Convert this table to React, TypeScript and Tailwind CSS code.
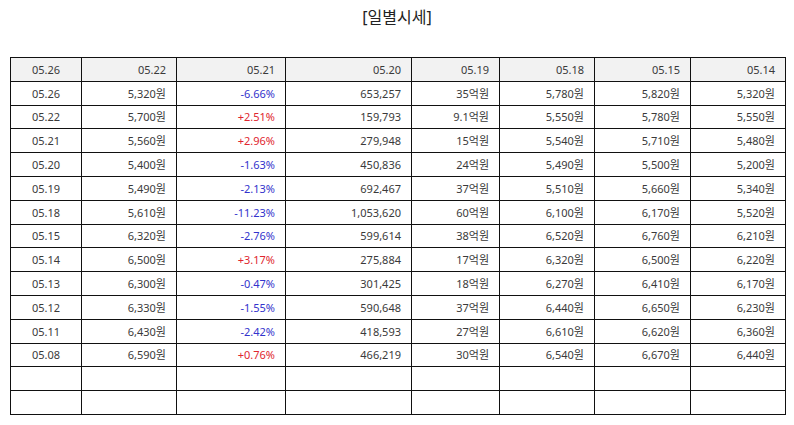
const header = ["05.26", "05.22", "05.21", "05.20", "05.19", "05.18", "05.15", "05.14"];

type Row = [string, string, string, string, string, string, string, string];

const rows: Row[] = [
  ["05.26", "5,320원", "-6.66%", "653,257", "35억원", "5,780원", "5,820원", "5,320원"],
  ["05.22", "5,700원", "+2.51%", "159,793", "9.1억원", "5,550원", "5,780원", "5,550원"],
  ["05.21", "5,560원", "+2.96%", "279,948", "15억원", "5,540원", "5,710원", "5,480원"],
  ["05.20", "5,400원", "-1.63%", "450,836", "24억원", "5,490원", "5,500원", "5,200원"],
  ["05.19", "5,490원", "-2.13%", "692,467", "37억원", "5,510원", "5,660원", "5,340원"],
  ["05.18", "5,610원", "-11.23%", "1,053,620", "60억원", "6,100원", "6,170원", "5,520원"],
  ["05.15", "6,320원", "-2.76%", "599,614", "38억원", "6,520원", "6,760원", "6,210원"],
  ["05.14", "6,500원", "+3.17%", "275,884", "17억원", "6,320원", "6,500원", "6,220원"],
  ["05.13", "6,300원", "-0.47%", "301,425", "18억원", "6,270원", "6,410원", "6,170원"],
  ["05.12", "6,330원", "-1.55%", "590,648", "37억원", "6,440원", "6,650원", "6,230원"],
  ["05.11", "6,430원", "-2.42%", "418,593", "27억원", "6,610원", "6,620원", "6,360원"],
  ["05.08", "6,590원", "+0.76%", "466,219", "30억원", "6,540원", "6,670원", "6,440원"],
];

const cell = "border border-[#111] h-[23.8px] px-[10px] py-0 text-right";
const first = "border border-[#111] h-[23.8px] px-[10px] py-0 text-center";

export default function App() {
  return (
    <div
      className="w-[794px] h-[425px] bg-white text-[#3a3a3a] overflow-hidden"
      style={{ fontFamily: '"Noto Sans", "Noto Sans CJK KR", sans-serif' }}
    >
      <h1 className="text-center text-[16px] text-[#222] pt-[5px] h-[57px]">[일별시세]</h1>
      <table className="ml-[10px] border-collapse table-fixed w-[775px] text-[11px] leading-none">
        <colgroup>
          <col className="w-[71px]" />
          <col className="w-[95px]" />
          <col className="w-[109px]" />
          <col className="w-[126px]" />
          <col className="w-[88px]" />
          <col className="w-[95px]" />
          <col className="w-[96px]" />
          <col className="w-[95px]" />
        </colgroup>
        <thead>
          <tr className="bg-[#f2f2f2]">
            {header.map((h, i) => (
              <th key={i} className={(i === 0 ? first : cell) + " font-normal"}>
                {h}
              </th>
            ))}
          </tr>
        </thead>
        <tbody>
          {rows.map((r, ri) => (
            <tr key={ri}>
              {r.map((v, i) => {
                let color = "";
                if (i === 2) color = v.startsWith("+") ? " text-[#e0262f]" : " text-[#3333cc]";
                return (
                  <td key={i} className={(i === 0 ? first : cell) + color}>
                    {v}
                  </td>
                );
              })}
            </tr>
          ))}
          {[0, 1].map((k) => (
            <tr key={"e" + k}>
              {header.map((_, i) => (
                <td key={i} className={i === 0 ? first : cell}></td>
              ))}
            </tr>
          ))}
        </tbody>
      </table>
    </div>
  );
}
